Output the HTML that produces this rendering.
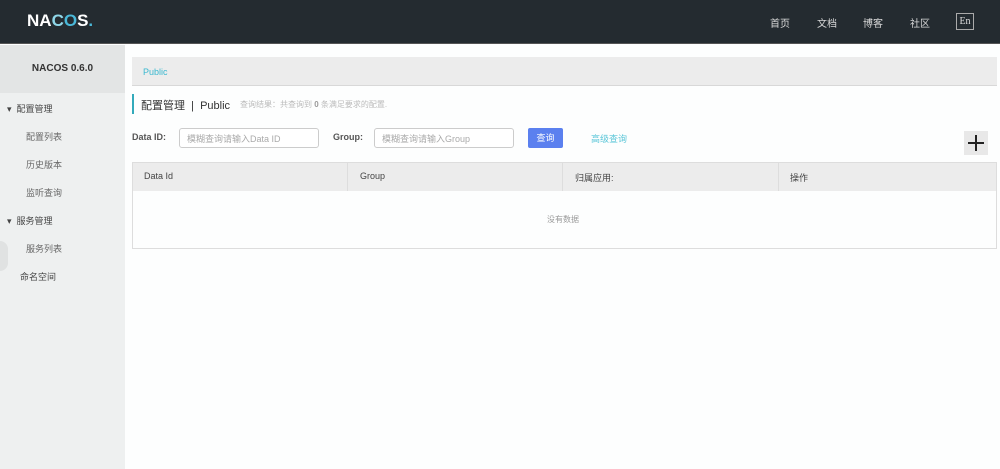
<!DOCTYPE html><html><head><meta charset="utf-8"><style>
*{margin:0;padding:0;box-sizing:border-box}
body{width:1000px;height:469px;background:#fdfefe;font-family:"Liberation Sans","Noto Sans CJK SC",sans-serif;position:relative;overflow:hidden;color:#333}
.a{position:absolute}
.hd{left:0;top:0;width:1000px;height:44px;background:#242b30;border-bottom:1px solid #555}
.nav{top:15px;color:#d8d8d8;font-size:10px}
.sb{left:0;top:45px;width:125px;height:424px;background:#eef0f0}
.sm{font-size:9px;color:#444}
.sub{font-size:9px;color:#666}
input{position:absolute;border:1px solid #ccc;border-radius:3px;height:20px;font-size:9px;padding-left:7px;color:#aaa;background:#fff;font-family:inherit}
.th{top:171px;font-size:9px;color:#444}
</style></head><body>
<div class="a hd"></div>
<div class="a" style="left:27px;top:11px;color:#fff;font-size:17px;font-weight:bold;letter-spacing:0">NA<span style="color:#8fd6e8">C</span><span style="color:#4ab8d8">O</span>S<span style="color:#4ab8d8">.</span></div>
<div class="a nav" style="left:770px">首页</div>
<div class="a nav" style="left:817px">文档</div>
<div class="a nav" style="left:863px">博客</div>
<div class="a nav" style="left:910px">社区</div>
<div class="a" style="left:956px;top:13px;width:18px;height:17px;border:1px solid #aaa;color:#ddd;font-size:10px;text-align:center;line-height:15px;font-family:'Liberation Serif',serif">En</div>
<div class="a sb"></div>
<div class="a" style="left:0;top:45px;width:125px;height:48px;background:#e3e5e5"></div>
<div class="a" style="left:0;top:63px;width:125px;text-align:center;font-size:10px;font-weight:bold;color:#333">NACOS 0.6.0</div>
<div class="a sm" style="left:7px;top:102px">▾&nbsp;&nbsp;配置管理</div>
<div class="a sub" style="left:26px;top:130px">配置列表</div>
<div class="a sub" style="left:26px;top:158px">历史版本</div>
<div class="a sub" style="left:26px;top:186px">监听查询</div>
<div class="a sm" style="left:7px;top:214px">▾&nbsp;&nbsp;服务管理</div>
<div class="a sub" style="left:26px;top:242px">服务列表</div>
<div class="a sm" style="left:20px;top:270px">命名空间</div>
<div class="a" style="left:0;top:241px;width:8px;height:30px;background:#e0e2e2;border-radius:0 8px 8px 0"></div>
<div class="a" style="left:132px;top:57px;width:865px;height:29px;background:#ececec;border-bottom:1px solid #d8d8d8"></div>
<div class="a" style="left:143px;top:67px;font-size:9px;color:#39b8d0">Public</div>
<div class="a" style="left:132px;top:94px;width:2px;height:20px;background:#33aabb"></div>
<div class="a" style="left:141px;top:97px;font-size:11px;color:#333">配置管理 &nbsp;|&nbsp; Public</div>
<div class="a" style="left:240px;top:99px;font-size:8px;color:#bbb">查询结果：共查询到 <b style="color:#999">0</b> 条满足要求的配置.</div>
<div class="a" style="left:132px;top:132px;font-size:9px;font-weight:bold;color:#555">Data ID:</div>
<input style="left:179px;top:128px;width:140px" value="模糊查询请输入Data ID">
<div class="a" style="left:333px;top:132px;font-size:9px;font-weight:bold;color:#555">Group:</div>
<input style="left:374px;top:128px;width:140px" value="模糊查询请输入Group">
<div class="a" style="left:528px;top:128px;width:35px;height:20px;background:#5b80ef;border-radius:2px;color:#fff;font-size:9px;text-align:center;line-height:20px">查询</div>
<div class="a" style="left:591px;top:132px;font-size:9px;color:#5ac6d8">高级查询</div>
<div class="a" style="left:964px;top:131px;width:24px;height:24px;background:#e8e8e8"></div>
<div class="a" style="left:968px;top:142px;width:16px;height:2px;background:#222"></div>
<div class="a" style="left:975px;top:135px;width:2px;height:16px;background:#222"></div>
<div class="a" style="left:132px;top:162px;width:865px;height:87px;border:1px solid #ddd"></div>
<div class="a" style="left:133px;top:163px;width:863px;height:28px;background:#ececec"></div>
<div class="a" style="left:347px;top:163px;width:1px;height:28px;background:#ddd"></div>
<div class="a" style="left:562px;top:163px;width:1px;height:28px;background:#ddd"></div>
<div class="a" style="left:778px;top:163px;width:1px;height:28px;background:#ddd"></div>
<div class="a th" style="left:144px">Data Id</div>
<div class="a th" style="left:360px">Group</div>
<div class="a th" style="left:575px">归属应用:</div>
<div class="a th" style="left:790px">操作</div>
<div class="a" style="left:547px;top:214px;font-size:8px;color:#999">没有数据</div>
</body></html>
